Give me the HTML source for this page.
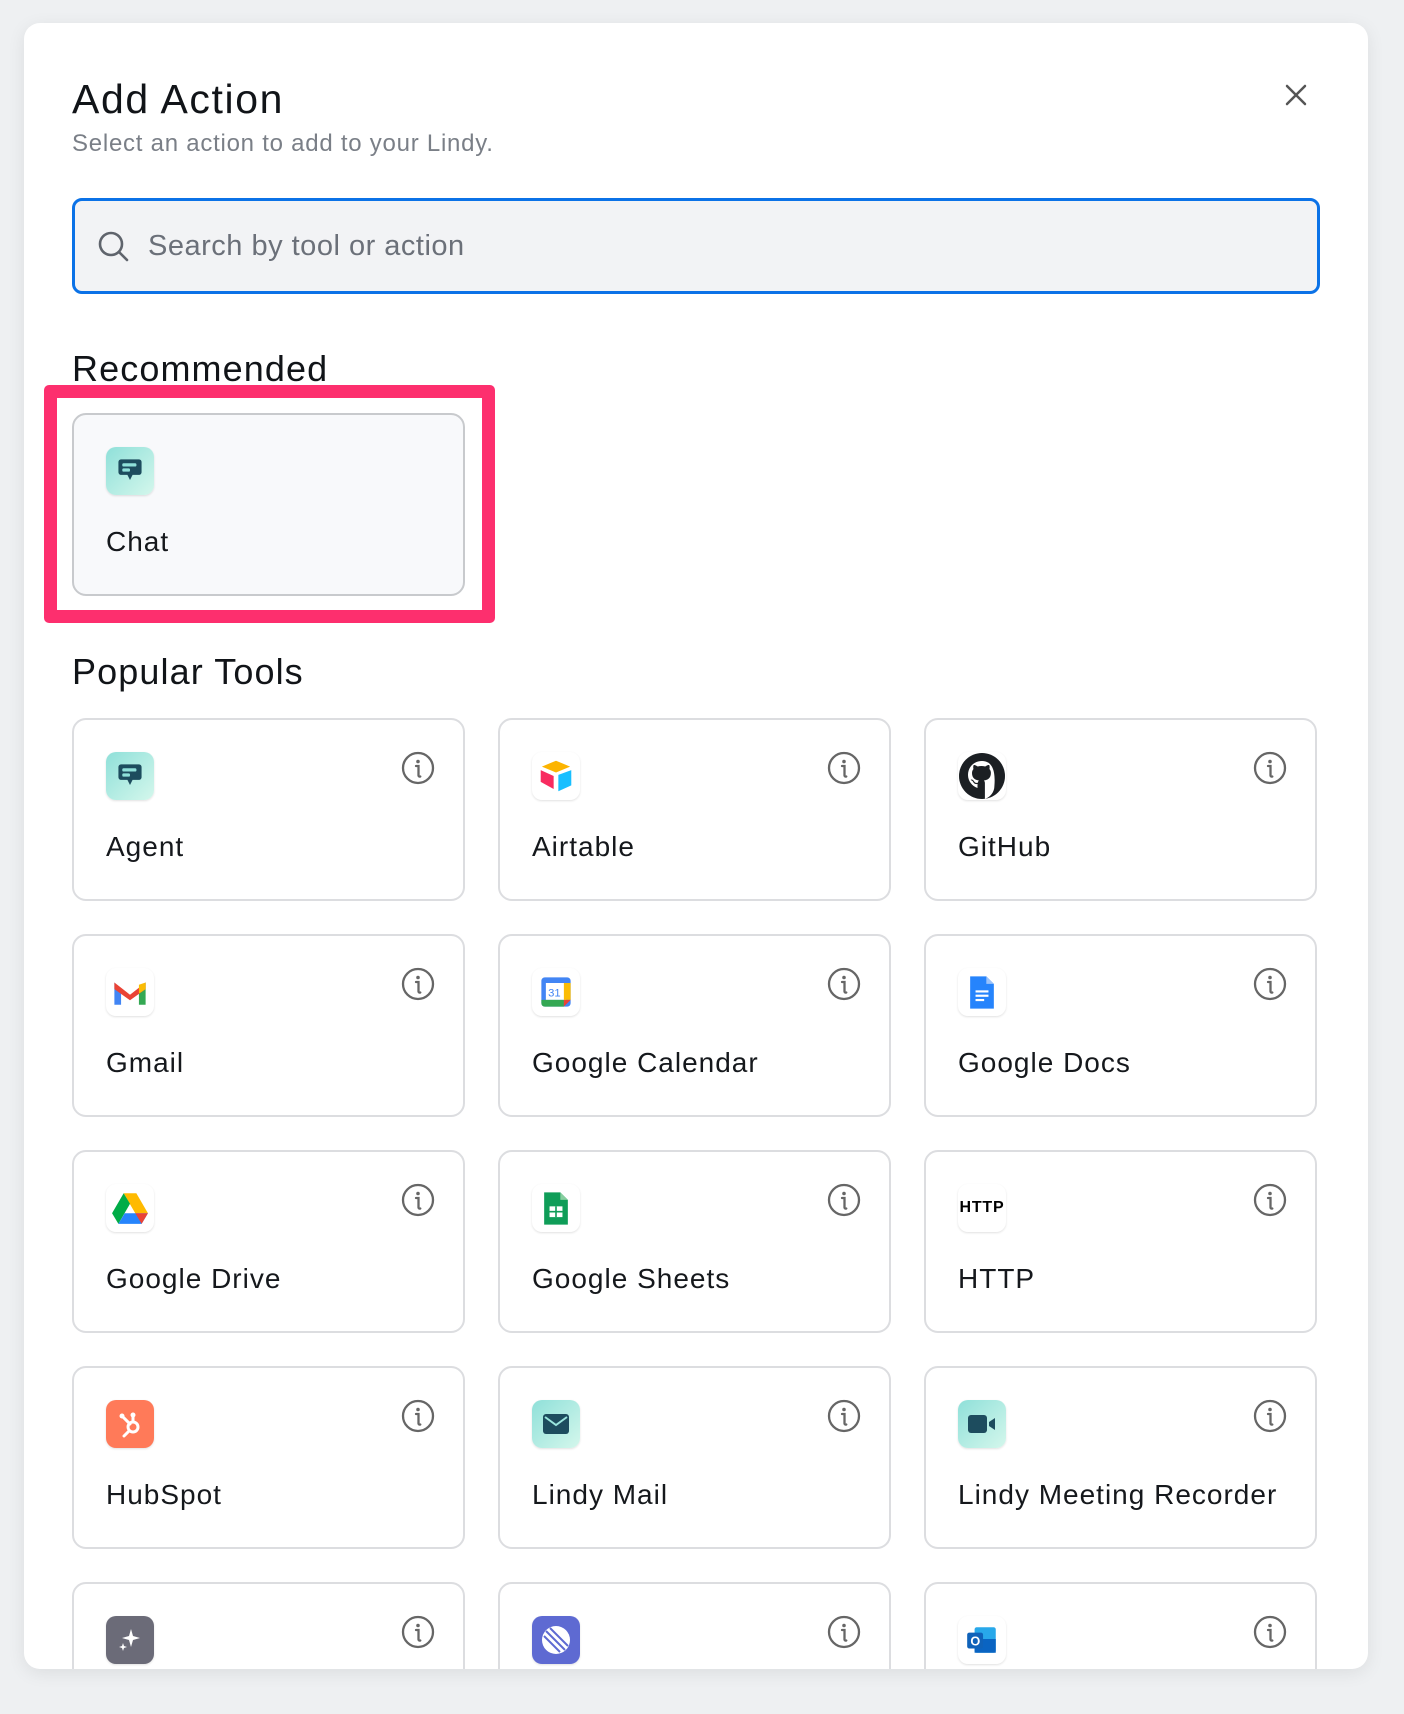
<!DOCTYPE html>
<html><head><meta charset="utf-8"><style>
*{margin:0;padding:0;box-sizing:border-box}
body{width:1404px;height:1714px;background:#eef0f2;font-family:"Liberation Sans",sans-serif;position:relative;overflow:hidden;color:#111418}
.modal{position:absolute;left:24px;top:23px;width:1344px;height:1646px;background:#fff;border-radius:16px;box-shadow:0 4px 18px rgba(0,0,0,.08);overflow:hidden}
.abs{position:absolute}
h1{position:absolute;left:48px;top:53px;font-size:41px;font-weight:400;letter-spacing:1.6px}
.sub{left:48px;top:107px;font-size:24px;color:#7a7f87;letter-spacing:.75px}
.close{left:1258px;top:58px}
.search{left:48px;top:175px;width:1248px;height:96px;border:3px solid #0b72e7;border-radius:10px;background:#f2f3f5}
.search span{position:absolute;left:73px;top:29px;font-size:29px;color:#6b7079;letter-spacing:.5px}
h2{position:absolute;left:48px;font-size:36px;font-weight:400;letter-spacing:1.1px}
.pink{left:20px;top:362px;width:451px;height:238px;border:13px solid #fd2f6e;border-radius:5px}
.card{position:absolute;width:393px;height:183px;border:2px solid #dcdde0;border-radius:14px;background:#fff}
.card .ic{position:absolute;left:32px;top:32px;width:48px;height:48px;border-radius:10px;background:#fff;box-shadow:0 1px 2px rgba(0,0,0,.12);display:flex;align-items:center;justify-content:center;overflow:hidden}
.card .lb{position:absolute;left:32px;top:111px;font-size:28px;color:#15181c;letter-spacing:1px}
.card .info{position:absolute;right:28px;top:31px}
.teal{background:linear-gradient(135deg,#8fe0d9,#d4f7ec)!important}
</style></head><body>
<div class="modal">
<h1>Add Action</h1>
<div class="abs sub">Select an action to add to your Lindy.</div>
<svg class="abs close" width="28" height="28" viewBox="0 0 28 28"><path d="M5 5L23 23M23 5L5 23" stroke="#555" stroke-width="2.5" stroke-linecap="round"/></svg>
<div class="abs search"><svg class="abs" style="left:22px;top:29px" width="34" height="34" viewBox="0 0 34 34"><circle cx="14" cy="14" r="11" fill="none" stroke="#5f646c" stroke-width="2.6"/><path d="M22 22L30 30" stroke="#5f646c" stroke-width="2.6" stroke-linecap="round"/></svg><span>Search by tool or action</span></div>
<h2 style="top:325px">Recommended</h2>
<div class="abs pink"></div>
<div class="card" style="left:48px;top:390px;background:#f8f9fb;border-color:#c8cacd">
<div class="ic teal"><svg width="36" height="36" viewBox="0 0 28 28"><path d="M5 7a2 2 0 012-2h14a2 2 0 012 2v8a2 2 0 01-2 2h-5l-2 4-2-4H7a2 2 0 01-2-2z" fill="#1d4c5e"/><rect x="8" y="8" width="11" height="2.5" rx="1" fill="#8fe0d9"/><rect x="8" y="12" width="6" height="2.5" rx="1" fill="#8fe0d9"/></svg></div>
<div class="lb">Chat</div></div>
<h2 style="top:628px">Popular Tools</h2>
<div id="g"></div>
</div>
<script>
const info='<svg class="info" width="34" height="34" viewBox="0 0 34 34"><circle cx="17" cy="17" r="15" fill="none" stroke="#666" stroke-width="2.3"/><circle cx="17" cy="10.5" r="1.8" fill="#666"/><path d="M15 15h2.5v9.5c0 1 .8 1.3 1.8 1" fill="none" stroke="#666" stroke-width="2.3" stroke-linecap="round"/></svg>';
const chat='<svg width="36" height="36" viewBox="0 0 28 28"><path d="M5 7a2 2 0 012-2h14a2 2 0 012 2v8a2 2 0 01-2 2h-5l-2 4-2-4H7a2 2 0 01-2-2z" fill="#1d4c5e"/><rect x="8" y="8" width="11" height="2.5" rx="1" fill="#8fe0d9"/><rect x="8" y="12" width="6" height="2.5" rx="1" fill="#8fe0d9"/></svg>';
const items=[
["Agent",chat,1],
["Airtable",'<svg width="40" height="40" viewBox="0 0 34 34"><path d="M17 4l12 5-12 5-12-5z" fill="#fcb400"/><path d="M19 16l11-4v13l-11 5z" fill="#18bfff"/><path d="M4 12l11 5v11L4 22z" fill="#f82b60"/></svg>'],
["GitHub",'<svg width="48" height="48" viewBox="0 0 48 48"><circle cx="24" cy="24" r="23" fill="#1b1f23"/><path d="M24 9c-8 0-14 6-14 14 0 6 4 11 9.5 13v-4c-3 .5-4-1.5-4-1.5-1-2-2-2-2-2-1.5-1 0-1 0-1 1.5 0 2.5 1.7 2.5 1.7 1.5 2.3 3.5 1.7 4 1.3 0-1 .5-1.7 1-2-3.5-.5-7-2-7-7.5 0-1.6.6-3 1.5-4-.2-.4-.6-2 .2-4 0 0 1.3-.4 4 1.5a14 14 0 017.5 0c2.7-2 4-1.5 4-1.5.8 2 .3 3.6.2 4 1 1 1.5 2.4 1.5 4 0 5.5-3.5 7-7 7.5.5.5 1 1.4 1 2.7V47c5.5-2 9.5-7 9.5-13C38 15 32 9 24 9z" fill="#fff"/></svg>'],
["Gmail",'<svg width="36" height="29" viewBox="0 0 32 26"><path d="M2 4v20h6V11z" fill="#4285f4"/><path d="M30 4v20h-6V11z" fill="#34a853"/><path d="M2 4l14 11L30 4v6L16 20 2 10z" fill="#ea4335"/><path d="M24 6l6-2v6l-6 4z" fill="#fbbc04"/></svg>'],
["Google Calendar",'<svg width="36" height="36" viewBox="0 0 32 32"><rect x="3" y="3" width="26" height="26" rx="3" fill="#4285f4"/><rect x="7" y="8" width="18" height="15" fill="#fff"/><path d="M3 23h20v6H6a3 3 0 01-3-3z" fill="#34a853"/><path d="M23 8h6v15h-6z" fill="#fbbc04"/><path d="M23 23h6l-6 6z" fill="#ea4335"/><text x="9" y="20" font-size="10" fill="#4285f4" font-family="Liberation Sans">31</text></svg>'],
["Google Docs",'<svg width="28" height="37" viewBox="0 0 26 34"><path d="M2 2h15l7 7v23H2z" fill="#2684fc"/><path d="M17 2v7h7z" fill="#9cc3fa"/><rect x="7" y="15" width="12" height="2" fill="#fff"/><rect x="7" y="19" width="12" height="2" fill="#fff"/><rect x="7" y="23" width="8" height="2" fill="#fff"/></svg>'],
["Google Drive",'<svg width="38" height="34" viewBox="0 0 36 32"><path d="M12 2h12l11 19h-12z" fill="#ffba00"/><path d="M12 2L1 21l6 10 11-19z" fill="#00ac47"/><path d="M7 31h22l6-10H13z" fill="#2684fc"/><path d="M23 21h12l-6 10z" fill="#ea4335"/></svg>'],
["Google Sheets",'<svg width="28" height="37" viewBox="0 0 26 34"><path d="M2 2h15l7 7v23H2z" fill="#0f9d58"/><path d="M17 2v7h7z" fill="#87ce9f"/><rect x="7" y="15" width="12" height="10" fill="#fff"/><path d="M7 20h12M13 15v10" stroke="#0f9d58" stroke-width="1.5"/></svg>'],
["HTTP",'<span style="font-weight:700;font-size:16px;color:#000;letter-spacing:.8px">HTTP</span>'],
["HubSpot",'<svg width="30" height="30" viewBox="0 0 30 30"><circle cx="18" cy="18" r="5" fill="none" stroke="#fff" stroke-width="3"/><path d="M18 13V7M8 8l7 7M13 23l-4 4" stroke="#fff" stroke-width="3" stroke-linecap="round"/><circle cx="18" cy="6" r="2.5" fill="#fff"/><circle cx="7" cy="7" r="2.5" fill="#fff"/></svg>',"#ff7a59"],
["Lindy Mail",'<svg width="28" height="22" viewBox="0 0 28 22"><rect x="1" y="1" width="26" height="20" rx="3" fill="#1d4c5e"/><path d="M3 4l11 8 11-8" fill="none" stroke="#9ae5dd" stroke-width="2"/></svg>',1],
["Lindy Meeting Recorder",'<svg width="30" height="22" viewBox="0 0 30 22"><rect x="1" y="2" width="19" height="18" rx="3" fill="#1d4c5e"/><path d="M22 9l6-4v12l-6-4z" fill="#1d4c5e"/></svg>',1],
["",'<svg width="30" height="30" viewBox="0 0 30 30"><path d="M16 4l2 7 7 2-7 2-2 7-2-7-7-2 7-2z" fill="#fff"/><path d="M8 18l1 3 3 1-3 1-1 3-1-3-3-1 3-1z" fill="#fff"/></svg>',"#6b6b78"],
["",'<svg width="48" height="48" viewBox="0 0 48 48"><rect width="48" height="48" fill="#5e6ad2"/><circle cx="24" cy="24" r="14" fill="#fff"/><path d="M12 20l16 16M14 15l19 19M18 12l18 18" stroke="#5e6ad2" stroke-width="2"/></svg>'],
["",'<svg width="36" height="36" viewBox="0 0 34 34"><rect x="10" y="5" width="20" height="24" rx="2" fill="#28a8ea"/><path d="M10 16h20v13H10z" fill="#0a64c2"/><rect x="3" y="10" width="15" height="15" rx="2" fill="#0f62b9"/><text x="6" y="22" font-size="12" font-weight="700" fill="#fff" font-family="Liberation Sans">O</text></svg>']
];
const xs=[48,474,900];let h='';
items.forEach((it,i)=>{const c=i%3,r=Math.floor(i/3);const x=xs[c],y=695+r*216;
let st=it[2]===1?' teal':'';let bg=(typeof it[2]==='string')?' style="background:'+it[2]+'"':'';
h+=`<div class="card" style="left:${x}px;top:${y}px"><div class="ic${st}"${bg}>${it[1]}</div>${info}<div class="lb">${it[0]}</div></div>`;});
document.getElementById('g').innerHTML=h;
</script>
</body></html>
